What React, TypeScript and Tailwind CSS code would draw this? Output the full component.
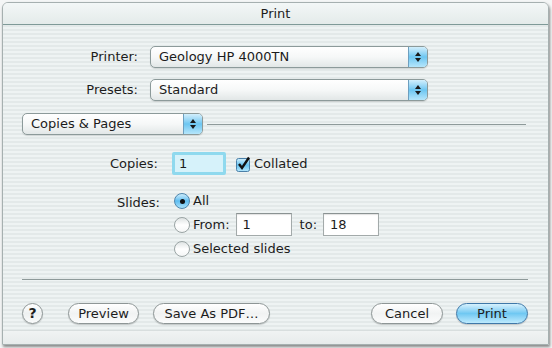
import React from "react";

const Arrows = () => (
  <svg width="8" height="12" viewBox="0 0 8 12">
    <path d="M1 5 L4 1 L7 5 Z" fill="#1a1a1a" />
    <path d="M1 7 L4 11 L7 7 Z" fill="#1a1a1a" />
  </svg>
);

const Popup = ({ label, className }: { label: string; className: string }) => (
  <div
    className={`flex h-[22px] rounded-[5px] border border-[#8c9a9a] bg-gradient-to-b from-white via-[#f6f8f8] to-[#e2e7e7] shadow-[0_1px_1px_rgba(0,0,0,0.12)] ${className}`}
  >
    <div className="flex flex-1 items-center pl-[8px]">{label}</div>
    <div className="flex w-[19px] items-center justify-center rounded-r-[4px] border-l border-[#6d9fbf] bg-gradient-to-b from-[#d2effc] via-[#6cc6f1] to-[#b5e6fb]">
      <Arrows />
    </div>
  </div>
);

const Radio = ({ on }: { on?: boolean }) =>
  on ? (
    <div className="flex h-[16px] w-[16px] items-center justify-center rounded-full border border-[#4f86ad] bg-gradient-to-b from-[#cdeefc] via-[#5dbdf0] to-[#a8e2fb]">
      <div className="h-[5px] w-[5px] rounded-full bg-[#111]" />
    </div>
  ) : (
    <div className="h-[16px] w-[16px] rounded-full border border-[#9aa4a4] bg-gradient-to-b from-[#dfe4e4] via-white to-[#f4f6f6]" />
  );

const Field = ({ value, className }: { value: string; className: string }) => (
  <div
    className={`flex h-[23px] items-center border border-[#a3aaaa] border-t-[#8a9292] bg-white pl-[6px] shadow-[inset_0_1px_1px_rgba(0,0,0,0.12)] ${className}`}
  >
    {value}
  </div>
);

const Button = ({ label, className, primary }: { label: string; className: string; primary?: boolean }) => (
  <div
    className={`flex h-[21px] items-center justify-center rounded-full border shadow-[0_1px_1px_rgba(0,0,0,0.18)] ${
      primary
        ? "border-[#3f78a8] bg-gradient-to-b from-[#d6f1fd] via-[#6fc8f2] to-[#bdeafd]"
        : "border-[#8e9696] bg-gradient-to-b from-white via-[#f1f3f3] to-[#fbfcfc]"
    } ${className}`}
  >
    {label}
  </div>
);

export default function App() {
  return (
    <div
      className="h-[348px] w-[552px] overflow-hidden bg-[#f4f6f6] pl-[2px] pt-[2px] text-[13px] text-[#1c1c1c]"
      style={{ fontFamily: '"DejaVu Sans", "Liberation Sans", sans-serif' }}
    >
      <div className="flex h-[343px] w-[547px] flex-col overflow-hidden rounded-t-[6px] border border-[#a6b0b0] shadow-[1px_2px_3px_rgba(0,0,0,0.45)] bg-[repeating-linear-gradient(to_bottom,#eef3f3_0px,#eef3f3_2px,#e3e9e9_2px,#e3e9e9_4px)]">
        {/* title bar */}
        <div className="flex h-[22px] shrink-0 items-center justify-center border-b border-[#7f9a98] bg-gradient-to-b from-[#f3f7f7] to-[#e4ebea]">
          Print
        </div>

        {/* printer + presets */}
        <div className="mt-[21px] flex items-center">
          <div className="w-[135px] text-right">Printer:</div>
          <Popup label="Geology HP 4000TN" className="ml-[12px] w-[278px]" />
        </div>
        <div className="mt-[11px] flex items-center">
          <div className="w-[135px] text-right">Presets:</div>
          <Popup label="Standard" className="ml-[12px] w-[278px]" />
        </div>

        {/* pane selector */}
        <div className="mt-[12px] flex items-center pl-[19px]">
          <Popup label="Copies & Pages" className="w-[181px]" />
          <div className="ml-[4px] h-px w-[319px] bg-[#8e9a9a]" />
        </div>

        {/* copies */}
        <div className="mt-[17px] flex items-center">
          <div className="w-[155px] text-right">Copies:</div>
          <div className="ml-[14px] flex h-[23px] w-[54px] items-center rounded-[2px] border-[3px] border-[#8fd9ee] bg-[#d6f2fa] pl-[4px]">
            1
          </div>
          <svg className="ml-[10px]" width="15" height="16" viewBox="0 0 15 16">
            <defs>
              <linearGradient id="cb" x1="0" y1="0" x2="0" y2="1">
                <stop offset="0" stopColor="#d4f0fd" />
                <stop offset="0.5" stopColor="#66c3f0" />
                <stop offset="1" stopColor="#b6e7fc" />
              </linearGradient>
            </defs>
            <rect x="0.5" y="2.5" width="13" height="13" rx="2" fill="url(#cb)" stroke="#4b80a8" />
            <path d="M3 8 L6 12 L13 1.5" fill="none" stroke="#111" strokeWidth="2.4" />
          </svg>
          <div className="ml-[3px]">Collated</div>
        </div>

        {/* slides */}
        <div className="mt-[16px] flex">
          <div className="w-[157px] pt-[2px] text-right">Slides:</div>
          <div className="ml-[14px] flex flex-col">
            <div className="flex h-[20px] items-center gap-[3px]">
              <Radio on />
              <span>All</span>
            </div>
            <div className="flex h-[27px] items-center gap-[3px]">
              <Radio />
              <span>From:</span>
              <Field value="1" className="ml-[3px] w-[56px]" />
              <span className="ml-[5px]">to:</span>
              <Field value="18" className="ml-[3px] w-[56px]" />
            </div>
            <div className="flex h-[22px] items-center gap-[3px]">
              <Radio />
              <span>Selected slides</span>
            </div>
          </div>
        </div>

        {/* separator */}
        <div className="ml-[19px] mt-[19px] h-px w-[506px] bg-[#8e9a9a]" />

        {/* buttons */}
        <div className="mt-[23px] flex items-center pl-[19px]">
          <div className="flex h-[21px] w-[21px] items-center justify-center rounded-full border border-[#8e9696] bg-gradient-to-b from-white via-[#eef1f1] to-[#fafbfb] text-[14px] font-bold shadow-[0_1px_1px_rgba(0,0,0,0.18)]">
            ?
          </div>
          <Button label="Preview" className="ml-[25px] w-[71px]" />
          <Button label="Save As PDF…" className="ml-[14px] w-[117px]" />
          <Button label="Cancel" className="ml-[101px] w-[72px]" />
          <Button label="Print" className="ml-[13px] w-[72px]" primary />
        </div>

        {/* bottom band */}
        <div className="mt-auto h-[14px] border-t border-[#d8dede] bg-gradient-to-b from-[#f0f3f3] to-[#e7ebeb]" />
      </div>
    </div>
  );
}
